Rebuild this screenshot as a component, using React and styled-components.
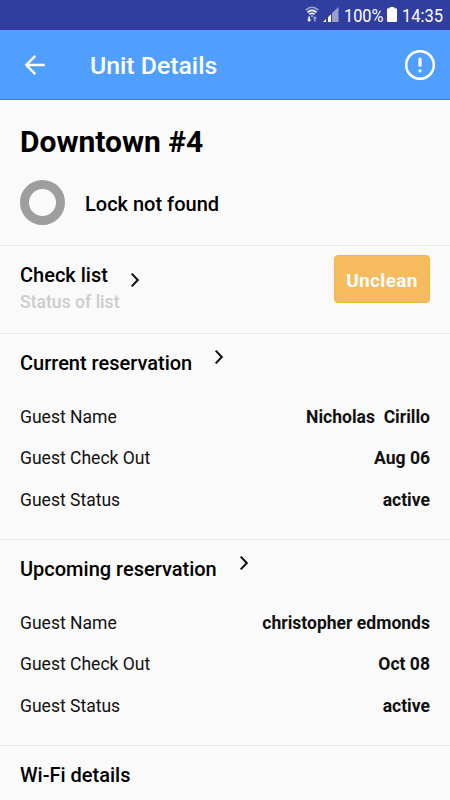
import React from "react";
import styled, { createGlobalStyle } from "styled-components";

const upcoming = [
  { label: "Guest Name", value: "christopher edmonds" },
  { label: "Guest Check Out", value: "Oct 08" },
  { label: "Guest Status", value: "active" },
];

const current = [
  { label: "Guest Name", value: "Nicholas  Cirillo" },
  { label: "Guest Check Out", value: "Aug 06" },
  { label: "Guest Status", value: "active" },
];

const Chevron = () => (
  <ChevronSvg viewBox="0 0 10 16">
    <path d="M1.7 1.6L7.8 8L1.7 14.4" />
  </ChevronSvg>
);

const Reservation = ({ title, guests }) => (
  <Reservationdiv>
    <Titlerow>
      <Sectiontitle>{title}</Sectiontitle>
      <Chevron />
    </Titlerow>
    {guests.map((guest) => (
      <Guestrow key={guest.label}>
        <Guestlabel>{guest.label}</Guestlabel>
        <Guestvalue>{guest.value}</Guestvalue>
      </Guestrow>
    ))}
  </Reservationdiv>
);

const App = () => {
  return (
    <Alldiv>
      <GlobalStyle />
      <Statusbar>
        <Wifi viewBox="0 0 14 17">
          <g fill="none" stroke="#fff" strokeLinecap="butt">
            <path d="M0.7 4.1Q7 -1.5 13.3 4.1" strokeWidth="1.5" opacity="0.55" />
            <path d="M2.4 6.3Q7 2.5 11.6 6.3" strokeWidth="1.5" />
            <path d="M4.3 8.4Q7 6.3 9.7 8.4" strokeWidth="1.5" />
          </g>
          <path d="M5.8 9.6h2.4L7 11.2z" fill="#fff" />
          <path d="M3.4 10.5h1.6v3h1.5L4.2 16L1.9 13.5h1.5z" fill="#fff" />
          <path d="M9 15.5v-3H7.5L9.8 10l2.3 2.5h-1.5v3z" fill="#fff" opacity="0.5" />
        </Wifi>
        <Signal viewBox="0 0 16 15">
          <path d="M0 15L3 12v3zM5 15v-4.7l3-3V15z" fill="#fff" />
          <path d="M9 15V6L15.5 0v15z" fill="#fff" opacity="0.5" />
        </Signal>
        <Percent>100%</Percent>
        <Battery viewBox="0 0 10 15">
          <path d="M2.7 0h4.6v1.3H9q1 0 1 1V14q0 1-1 1H1q-1 0-1-1V2.3q0-1 1-1h1.7z" fill="#fff" />
        </Battery>
        <Clock>14:35</Clock>
      </Statusbar>

      <Header>
        <Back viewBox="0 0 20 20">
          <path d="M19.8 10H1.6M10.3 .9L1.2 10L10.3 19.1" />
        </Back>
        <Headertitle>Unit Details</Headertitle>
        <Alert viewBox="0 0 30 30">
          <circle cx="15" cy="15" r="13.8" fill="none" stroke="#fff" strokeWidth="2.5" />
          <path d="M15 9v6.2" stroke="#fff" strokeWidth="3.2" strokeLinecap="round" />
          <circle cx="15" cy="20.8" r="1.6" fill="#fff" />
        </Alert>
      </Header>

      <Unitdiv>
        <Unitname>Downtown #4</Unitname>
        <Lockrow>
          <Ring />
          <Locktext>Lock not found</Locktext>
        </Lockrow>
      </Unitdiv>

      <Checkdiv>
        <div>
          <Sectiontitle>Check list</Sectiontitle>
          <Checkstatus>Status of list</Checkstatus>
        </div>
        <Checkarrow>
          <Chevron />
        </Checkarrow>
        <Unclean>Unclean</Unclean>
      </Checkdiv>

      <Reservation title="Current reservation" guests={current} />
      <Reservation title="Upcoming reservation" guests={upcoming} />

      <Wifidiv>
        <Sectiontitle>Wi-Fi details</Sectiontitle>
      </Wifidiv>
    </Alldiv>
  );
};

const GlobalStyle = createGlobalStyle`
  * {
    box-sizing: border-box;
  }
  body {
    margin: 0;
    background: #fafafa;
    font-family: Roboto, "Liberation Sans", sans-serif;
  }
`;

const Alldiv = styled.div`
  width: 450px;
  height: 800px;
  overflow: hidden;
  background: #fafafa;
  color: #000;
`;

const Statusbar = styled.div`
  display: flex;
  height: 30px;
  padding-left: 305px;
  background: #303f9f;
  color: #fff;
  font-size: 19px;
  line-height: 31px;
  white-space: nowrap;
`;

const Wifi = styled.svg`
  width: 14px;
  height: 17px;
  margin-top: 6px;
`;

const Signal = styled.svg`
  width: 16px;
  height: 15px;
  margin: 7px 5px 0 4px;
`;

const Percent = styled.span`
  width: 43px;
  transform: scaleX(0.86);
  transform-origin: left;
`;

const Battery = styled.svg`
  width: 10px;
  height: 15px;
  margin: 7px 5px 0 0;
`;

const Clock = styled.span`
  transform: scaleX(0.87);
  transform-origin: left;
`;

const Header = styled.div`
  display: flex;
  align-items: center;
  height: 70px;
  padding: 0 15px 0 25px;
  background: #509fff;
  border-bottom: 1px solid #2190f5;
`;

const Back = styled.svg`
  width: 20px;
  height: 20px;
  fill: none;
  stroke: #fff;
  stroke-width: 2.4;
`;

const Headertitle = styled.div`
  margin-left: 45px;
  padding-top: 1px;
  color: #fff;
  font-size: 24.8px;
  font-weight: 500;
`;

const Alert = styled.svg`
  width: 30px;
  height: 30px;
  margin-left: auto;
`;

const Unitdiv = styled.div`
  height: 146px;
  padding: 24px 20px 0;
  border-bottom: 1px solid #e8e8e8;
`;

const Unitname = styled.div`
  font-size: 30px;
  font-weight: 700;
  line-height: 36px;
`;

const Lockrow = styled.div`
  display: flex;
  align-items: center;
  gap: 20px;
  margin-top: 20px;
`;

const Ring = styled.div`
  width: 45px;
  height: 45px;
  border: 9px solid #9e9e9e;
  border-radius: 50%;
`;

const Locktext = styled.div`
  padding-top: 2px;
  font-size: 20px;
  font-weight: 500;
`;

const Sectiontitle = styled.div`
  font-size: 20px;
  font-weight: 500;
  line-height: 28px;
`;

const ChevronSvg = styled.svg`
  width: 10px;
  height: 16px;
  fill: none;
  stroke: #111;
  stroke-width: 2.1;
`;

const Checkdiv = styled.div`
  display: flex;
  height: 88px;
  padding: 15px 20px 0;
  border-bottom: 1px solid #e8e8e8;
`;

const Checkstatus = styled.div`
  color: #ccc;
  font-size: 17.6px;
  font-weight: 500;
  line-height: 26px;
`;

const Checkarrow = styled.div`
  margin: 11px 0 0 10px;
`;

const Unclean = styled.div`
  width: 96px;
  height: 48px;
  margin: -6px 0 0 auto;
  border: 1px solid #f4b63f;
  border-radius: 4px;
  background: #f5bb5c;
  color: #fff;
  font-size: 19px;
  font-weight: 700;
  letter-spacing: 0.35px;
  line-height: 49px;
  text-align: center;
`;

const Reservationdiv = styled.div`
  height: 206px;
  padding: 15px 20px 0;
  border-bottom: 1px solid #e8e8e8;
`;

const Titlerow = styled.div`
  display: flex;
  gap: 22px;
  height: 48.2px;
`;

const Guestrow = styled.div`
  display: flex;
  justify-content: space-between;
  height: 41.2px;
  font-size: 17.55px;
  line-height: 40px;
`;

const Guestlabel = styled.div`
  color: #111;
`;

const Guestvalue = styled.div`
  color: #111;
  font-weight: 700;
  white-space: pre;
`;

const Wifidiv = styled.div`
  padding: 15px 20px 0;
`;

export default App;
